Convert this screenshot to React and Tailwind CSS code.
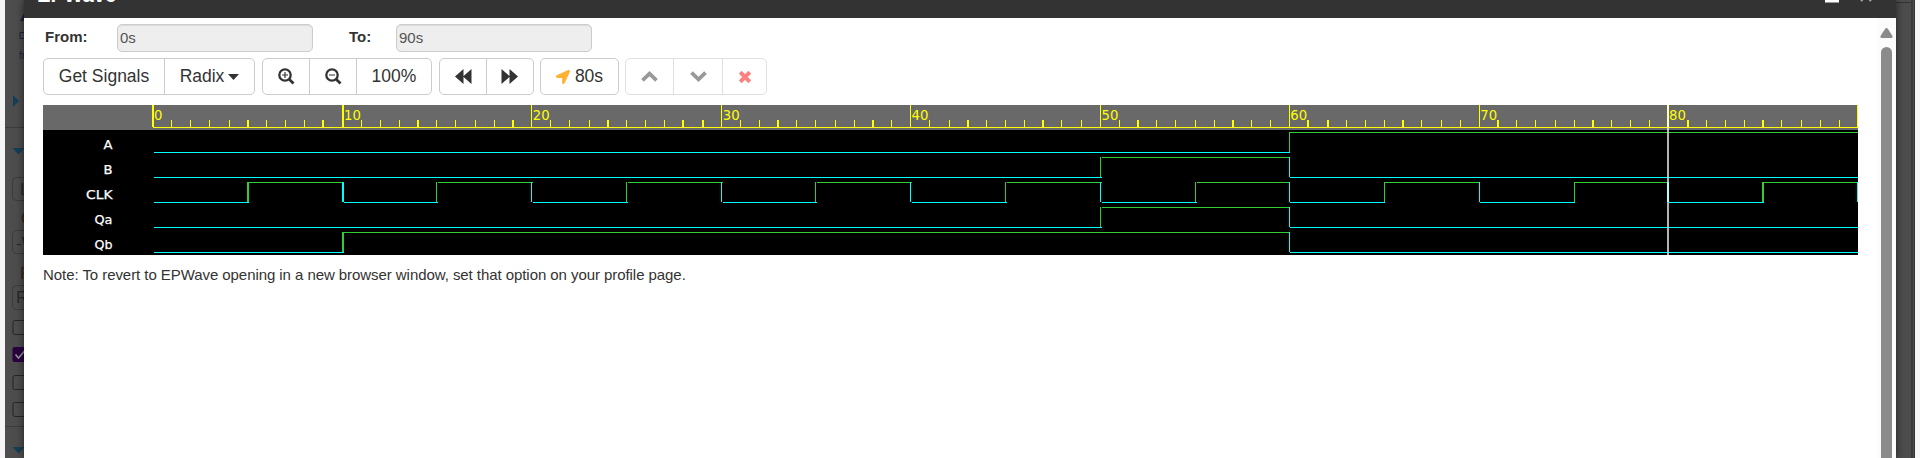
import { FaLocationArrow } from "react-icons/fa";

const GREEN = "#32cd32";
const CYAN = "#00ffff";

const rawX = (t) => 109.49 + 1.25 * Math.round(t * 15.1555);
const edge = (t) => {
  const x = Math.round(rawX(t));
  return { x, w: Math.round(rawX(t) + 1.25) - x };
};
const runX = (t) => Math.min(1815, Math.ceil(rawX(t) + 1.25));

const signals = [
  { name: "A", width: 9, changes: [60] },
  { name: "B", width: 9, changes: [50, 60] },
  { name: "CLK", width: 26.5, changes: [5, 10, 15, 20, 25, 30, 35, 40, 45, 50, 55, 60, 65, 70, 75, 80, 85, 90] },
  { name: "Qa", width: 18, changes: [50, 60] },
  { name: "Qb", width: 18, changes: [10, 60] },
];

function Trace({ changes, row }) {
  const high = 27 + row * 25;
  const low = high + 20;
  const times = [0, ...changes];
  return times.map((t, i) => {
    const isHigh = i % 2 === 1;
    const end = i + 1 < times.length ? times[i + 1] : 90;
    const color = isHigh ? GREEN : CYAN;
    const e = edge(t);
    const x1 = runX(t);
    return (
      <g key={t} fill={color}>
        {i > 0 && <rect x={e.x} y={high} width={e.w} height={20} />}
        {end > t && <rect x={x1} y={isHigh ? high : low} width={runX(end) - x1} height={1} />}
      </g>
    );
  });
}

function Waves() {
  const ticks = Array.from({ length: 91 }, (_, i) => i);
  return (
    <svg width="1815" height="150" viewBox="0 0 1815 150" className="block" shapeRendering="crispEdges">
      <rect width="1815" height="150" fill="#000" />
      <rect width="1815" height="25" fill="#696969" />
      <g fill="#ffff00">
        <rect x="110" y="22" width="1705" height="1" />
        {ticks.map((t) => {
          const e = edge(t);
          const major = t % 10 === 0;
          return <rect key={t} x={e.x} y={major ? 0 : 15} width={e.w} height={major ? 22 : 7} />;
        })}
      </g>
      <g fill="#ffff00" fontFamily="'DejaVu Sans', sans-serif" fontSize="13.2">
        {[0, 10, 20, 30, 40, 50, 60, 70, 80].map((t) => (
          <text key={t} x={rawX(t) + 1.6} y="15" textLength={String(t).length * 8.4} lengthAdjust="spacingAndGlyphs">{t}</text>
        ))}
      </g>
      {signals.map((s, i) => (
        <g key={s.name}>
          <text x="69.5" y={44 + i * 25} textAnchor="end" fill="#fff" stroke="#fff" strokeWidth="0.25" fontFamily="'DejaVu Sans', sans-serif" fontSize="12.8" textLength={s.width} lengthAdjust="spacingAndGlyphs">{s.name}</text>
          <Trace changes={s.changes} row={i} />
        </g>
      ))}
      <rect x="1624" y="0" width="2" height="150" fill="#fff" opacity="0.7" />
    </svg>
  );
}

function Magnifier({ plus }) {
  return (
    <svg width="17" height="17" viewBox="0 0 17 17" fill="none" stroke="#333">
      <circle cx="7" cy="7" r="5.700" strokeWidth="2.300" />
      <path d="M11.200 11.200l4.300 4.300" strokeWidth="2.800" />
      <path d={plus ? "M4 7h6M7 4v6" : "M4 7h6"} strokeWidth="1.200" />
    </svg>
  );
}

function Group({ children, faded, className = "" }) {
  return (
    <div className={`flex h-[37px] divide-x overflow-hidden rounded-[5px] border bg-white text-[17.5px] text-[#333] ${faded ? "divide-[#e0e0e0] border-[#e0e0e0]" : "divide-[#ccc] border-[#ccc]"} ${className}`}>
      {children}
    </div>
  );
}

function Btn({ className, children }) {
  return <button className={`flex items-center justify-center whitespace-nowrap ${className}`}>{children}</button>;
}

function LeftStrip() {
  return (
    <div className="w-6 shrink-0 overflow-hidden border-l-[5px] border-[#f5f5f5] bg-[#4d4d4d]">
      <svg width="19" height="458" viewBox="5 0 19 458">
        <path d="M20 21l4-8v8z" fill="#1d2444" />
        <path d="M24 32.500h-4v6h4" fill="none" stroke="#1d2444" />
        <text x="19" y="59" fontSize="10" fill="#1d2444" fontFamily="'Liberation Sans', sans-serif">fr</text>
        <path d="M13 95v12l6-6z M12.500 148h12l-6 6.500z M12.500 447h12l-6 6.500z" fill="#153f57" />
        <path d="M5 127.500h19M5 426.500h19" stroke="#3c3c3c" />
        <g fill="none" stroke="#3c3c3c">
          <rect x="12.500" y="177.500" width="40" height="23" rx="4" />
          <rect x="12.500" y="230.500" width="40" height="23" rx="4" />
          <rect x="12.500" y="285.500" width="40" height="24" rx="4" />
        </g>
        <g fontSize="17" fill="#2a2a2a" fontFamily="'Liberation Sans', sans-serif">
          <text x="20" y="195">L</text>
          <text x="21" y="224" fill="#3a2517">C</text>
          <text x="16" y="249">-W</text>
          <text x="20" y="279" fill="#3a2517">R</text>
          <text x="16" y="303">R</text>
        </g>
        <g fill="none" stroke="#262626">
          <rect x="13" y="320.500" width="14" height="14" rx="2" />
          <rect x="13" y="375.500" width="14" height="14" rx="2" />
          <rect x="13" y="402.500" width="14" height="14" rx="2" />
        </g>
        <rect x="12.500" y="347" width="15" height="15" rx="2" fill="#2b0040" />
        <path d="M15.500 354.500l3 3.500 6-7" fill="none" stroke="#999" strokeWidth="1.500" />
      </svg>
    </div>
  );
}

export default function App() {
  return (
    <div className="flex h-[458px] w-[1920px] overflow-hidden bg-[#4d4d4d] font-['Liberation_Sans',Arial,sans-serif] text-[#333]">
      <LeftStrip />
      <main className="z-10 flex w-[1872px] shrink-0 flex-col bg-white shadow-[0_0_8px_rgba(0,0,0,0.6)]">
        <header className="flex h-[18px] shrink-0 items-end justify-between overflow-hidden bg-[#333] text-white">
          <h1 className="mb-[11px] ml-[13px] text-[20.3px] leading-6 font-bold">EPWave</h1>
          <div className="mr-6 flex items-end gap-[21px]">
            <span className="mb-[15px] h-[3px] w-[14px] border-b border-[#999] bg-white" />
            <svg className="mb-[16px]" width="12" height="12" viewBox="0 0 12 12" stroke="#aaa" strokeWidth="2"><path d="M1 1l10 10M11 1L1 11" /></svg>
          </div>
        </header>
        <div className="flex min-h-0 flex-1 justify-between">
          <section className="ml-[19px] w-[1815px]">
            <div className="flex h-10 items-start pt-[6px] text-[15px]">
              <label className="mt-1 ml-[2px] w-[72px] leading-[18px] font-bold">From:</label>
              <input readOnly value="0s" className="h-7 w-[196px] rounded-[5px] border border-[#ccc] bg-[#eee] px-[2px] pb-px text-[#555] shadow-[inset_0_1px_1px_rgba(0,0,0,0.08)]" />
              <label className="mt-1 ml-[36px] w-[47px] leading-[18px] font-bold">To:</label>
              <input readOnly value="90s" className="h-7 w-[196px] rounded-[5px] border border-[#ccc] bg-[#eee] px-[2px] pb-px text-[#555] shadow-[inset_0_1px_1px_rgba(0,0,0,0.08)]" />
            </div>
            <div className="flex h-[47px] items-start">
              <Group>
                <Btn className="w-[121px]">Get Signals</Btn>
                <Btn className="w-[89px] gap-1">Radix<svg width="11" height="6" viewBox="0 0 11 6" fill="#333"><path d="M0 0h11L5.500 6z" /></svg></Btn>
              </Group>
              <Group className="ml-[7px]">
                <Btn className="w-[47px]"><Magnifier plus /></Btn>
                <Btn className="w-[47px]"><Magnifier /></Btn>
                <Btn className="w-[74px]">100%</Btn>
              </Group>
              <Group className="ml-[7px]">
                <Btn className="w-[47px]"><svg width="17" height="15" viewBox="0 0 17 15" fill="#333"><path d="M8.500 0v15L0 7.500zM16.500 0v15L8 7.500z" /></svg></Btn>
                <Btn className="w-[46px] pr-[2px]"><svg width="17" height="15" viewBox="0 0 17 15" fill="#333"><path d="M8.500 0v15L17 7.500zM.5 0v15L9 7.500z" /></svg></Btn>
              </Group>
              <Group className="ml-[6px]">
                <Btn className="w-[77px] gap-[5px]"><FaLocationArrow size={14} color="#ffb133" />80s</Btn>
              </Group>
              <Group faded className="ml-[6px]">
                <Btn className="w-[48px]"><svg width="17" height="11" viewBox="0 0 17 11" fill="none" stroke="#999" strokeWidth="3.800"><path d="M1.500 9.300L8.500 2.700 15.500 9.300" /></svg></Btn>
                <Btn className="w-[49px]"><svg width="17" height="11" viewBox="0 0 17 11" fill="none" stroke="#999" strokeWidth="3.800"><path d="M1.500 1.700L8.500 8.300 15.500 1.700" /></svg></Btn>
                <Btn className="w-[43px]"><svg width="12" height="12" viewBox="0 0 12 12" fill="none" stroke="#ff8080" strokeWidth="4"><path d="M1.200 1.200l9.600 9.600M10.800 1.200L1.200 10.800" /></svg></Btn>
              </Group>
            </div>
            <Waves />
            <p className="mt-[10px] text-[15px] leading-5 tracking-[-0.062px]">Note: To revert to EPWave opening in a new browser window, set that option on your profile page.</p>
          </section>
          <div className="flex w-[19px] flex-col items-center bg-[#fcfcfc]">
            <svg width="13" height="10" viewBox="0 0 13 10" className="mt-[10px] shrink-0" fill="#8b8b8b"><path d="M6.500 0Q7.500 0 8 1L12.500 8Q13 10 11.500 10H1.500Q0 10 .5 8L5 1Q5.500 0 6.500 0z" /></svg>
            <div className="mt-[9px] w-[11px] flex-1 rounded-t-full bg-[#8b8b8b]" />
          </div>
        </div>
      </main>
      <div className="flex w-6 shrink-0">
        <div className="h-[3px] w-[15px] border-b border-[#333] bg-[#4d4d4d]" />
        <div className="w-[2px] bg-[#3a3a3a]" />
        <div className="w-[1px] bg-[#4d4d4d]" />
        <div className="w-[1px] bg-[#333]" />
        <div className="flex-1 bg-[#f7f7f7]" />
      </div>
    </div>
  );
}
